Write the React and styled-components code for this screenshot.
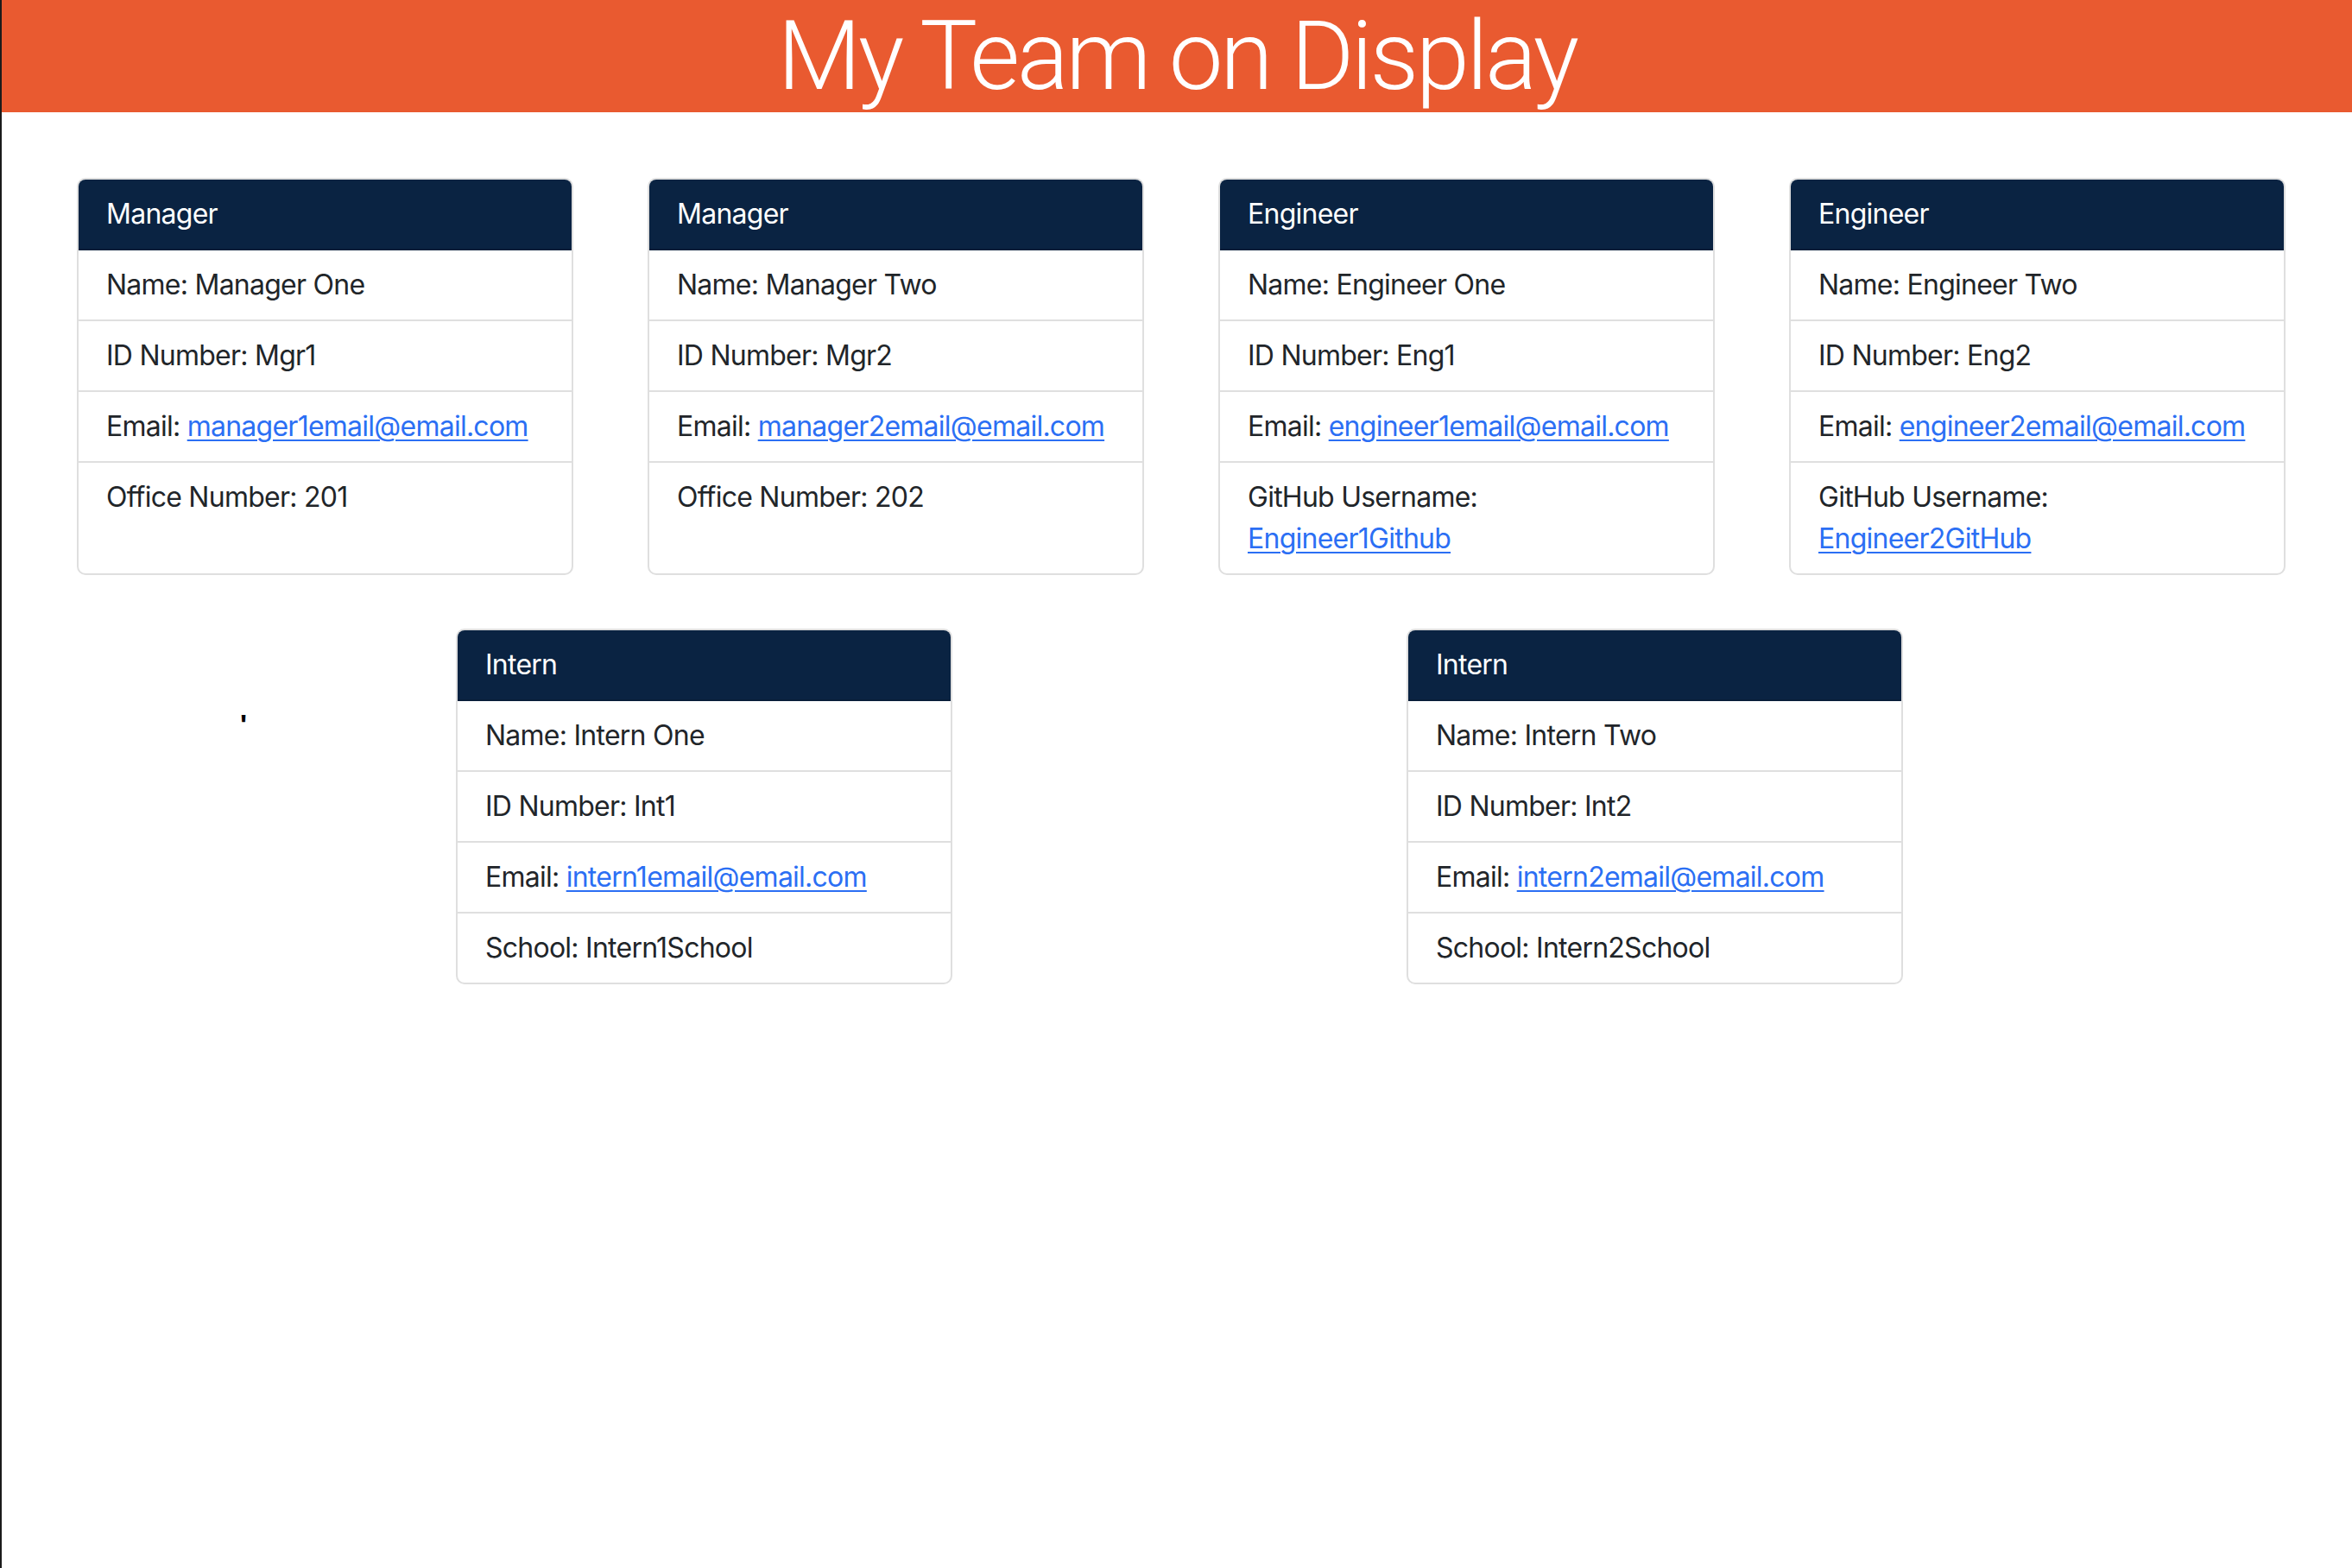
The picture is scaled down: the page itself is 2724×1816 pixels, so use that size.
import styled, { createGlobalStyle } from "styled-components";

const GlobalStyle = createGlobalStyle`
  * {
    box-sizing: border-box;
  }
  body {
    margin: 0;
    min-height: 100vh;
    background: #fff;
    border-left: 2px solid #1b1b1b;
    font-family: Inter, "Liberation Sans", Arial, sans-serif;
    color: #212529;
  }
`;

const Banner = styled.header`
  height: 130px;
  background-color: #e95a30;
  display: flex;
  justify-content: center;
`;

const Title = styled.h1`
  margin: 0;
  color: #fff;
  font-family: Roboto, Inter, sans-serif;
  font-weight: 300;
  font-size: 112px;
  line-height: 130px;
  letter-spacing: -3.5px;
`;

const Row = styled.div`
  position: relative;
  display: flex;
  align-items: stretch;
  gap: ${(props) => props.gap}px;
  justify-content: ${(props) => (props.center ? "center" : "flex-start")};
  padding: ${(props) => props.pad};
  margin-top: ${(props) => props.top}px;
`;

const Card = styled.div`
  width: 575px;
  flex: 0 0 575px;
  display: flex;
  flex-direction: column;
  border: 2px solid #dfdfdf;
  border-radius: 10px;
  overflow: hidden;
  background: #fff;
`;

const CardHeader = styled.div`
  background-color: #0a2342;
  color: #fff;
  padding: 16px 32px;
  font-size: 32px;
  line-height: 48px;
  letter-spacing: -0.75px;
  border-bottom: 2px solid rgba(0, 0, 0, 0.125);
`;

const Item = styled.div`
  padding: 16px 32px;
  font-size: 32px;
  line-height: 48px;
  letter-spacing: -0.75px;
  border-bottom: 2px solid #dfdfdf;
  &:last-child {
    border-bottom: 0;
  }
`;

const MailLink = styled.a`
  color: #2b6ff4;
  text-decoration: underline;
  text-underline-offset: 4px;
  text-decoration-thickness: 2px;
`;

const Stray = styled.span`
  position: absolute;
  left: 276px;
  top: 92px;
  font-size: 34px;
  font-weight: 700;
  color: #000;
  font-family: "Liberation Sans", Arial, sans-serif;
`;

const topRow = [
  { role: "Manager", name: "Manager One", id: "Mgr1", email: "manager1email@email.com", extra: { label: "Office Number", value: "201" } },
  { role: "Manager", name: "Manager Two", id: "Mgr2", email: "manager2email@email.com", extra: { label: "Office Number", value: "202" } },
  { role: "Engineer", name: "Engineer One", id: "Eng1", email: "engineer1email@email.com", extra: { label: "GitHub Username", value: "Engineer1Github", link: true } },
  { role: "Engineer", name: "Engineer Two", id: "Eng2", email: "engineer2email@email.com", extra: { label: "GitHub Username", value: "Engineer2GitHub", link: true } },
];

const bottomRow = [
  { role: "Intern", name: "Intern One", id: "Int1", email: "intern1email@email.com", extra: { label: "School", value: "Intern1School" } },
  { role: "Intern", name: "Intern Two", id: "Int2", email: "intern2email@email.com", extra: { label: "School", value: "Intern2School" } },
];

const EmployeeCard = ({ person }) => (
  <Card>
    <CardHeader>{person.role}</CardHeader>
    <Item>Name: {person.name}</Item>
    <Item>ID Number: {person.id}</Item>
    <Item>
      Email: <MailLink href={"mailto:" + person.email}>{person.email}</MailLink>
    </Item>
    <Item>
      {person.extra.label}:{" "}
      {person.extra.link ? (
        <MailLink href={"https://github.com/" + person.extra.value}>{person.extra.value}</MailLink>
      ) : (
        person.extra.value
      )}
    </Item>
  </Card>
);

export default function App() {
  return (
    <>
      <GlobalStyle />
      <Banner>
        <Title>My Team on Display</Title>
      </Banner>
      <Row gap={86} top={76} pad="0 0 0 87px">
        {topRow.map((p) => (
          <EmployeeCard key={p.id} person={p} />
        ))}
      </Row>
      <Row gap={526} top={62} pad="0 0 0 6px" center>
        <Stray>'</Stray>
        {bottomRow.map((p) => (
          <EmployeeCard key={p.id} person={p} />
        ))}
      </Row>
    </>
  );
}
